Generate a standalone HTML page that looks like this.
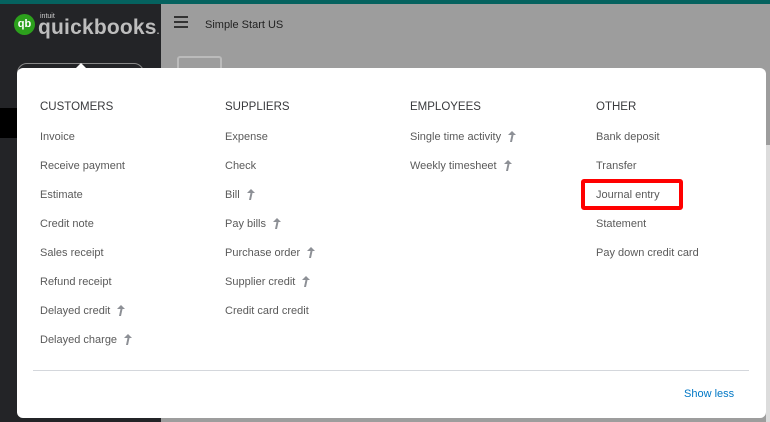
<!DOCTYPE html>
<html><head><meta charset="utf-8"><style>
*{margin:0;padding:0;box-sizing:border-box}
body{width:770px;height:422px;overflow:hidden;position:relative;background:#9d9d9d;font-family:"Liberation Sans",sans-serif}
.top{position:absolute;left:0;top:0;width:770px;height:4px;background:#05625f}
.side{position:absolute;left:0;top:4px;width:161px;height:418px;background:#232427}
.blk{position:absolute;left:0;top:108px;width:17px;height:30px;background:#000}
.logo{position:absolute;left:14px;top:14px;width:21px;height:21px;border-radius:50%;background:#2ca01c;color:#fff;font-size:11px;font-weight:bold;text-align:center;line-height:20px}
.qb{position:absolute;left:38px;top:16px;color:#bdbdbd;font-size:21px;font-weight:bold;letter-spacing:0.2px}
.intuit{position:absolute;left:40px;top:13px;color:#ccc;font-size:7px}
.hamb{position:absolute;left:174px;top:16px;width:14px}
.hamb i{display:block;height:2px;background:#333;margin-bottom:3px}
.title{position:absolute;left:205px;top:19px;font-size:11px;color:#222}
.box{position:absolute;left:177px;top:56px;width:45px;height:30px;border:2px solid #bbb;border-radius:3px}
.pill{position:absolute;left:17px;top:63px;width:127px;height:20px;border:1px solid #888;border-radius:10px}
.rs{position:absolute;left:766px;top:145px;width:4px;height:277px;background:#dcdcdc}
.panel{position:absolute;left:17px;top:68px;width:749px;height:350px;background:#fff;border-radius:6px}
.caret{position:absolute;left:75px;top:63px;width:0;height:0;border-left:6px solid transparent;border-right:6px solid transparent;border-bottom:6px solid #fff}
.col{position:absolute;top:33px;font-size:11px;color:#393a3d}
.col h4{font-weight:normal;font-size:11.5px;color:#393a3d;margin-bottom:15px;height:15px}
.col div{height:29px;color:#5a5a5a}
.up{display:inline-block;vertical-align:-2px;margin-left:6px}
.hr{position:absolute;left:16px;top:302px;width:716px;height:1px;background:#d4d7dc}
.sl{position:absolute;left:667px;top:320px;font-size:11px;color:#0077c5}
.red{position:absolute;left:581px;top:179px;width:102px;height:31px;border:4px solid #f00;border-radius:3px}
</style></head><body>
<div class="top"></div>
<div class="side"></div>
<div class="blk"></div>
<div class="logo">qb</div>
<div class="intuit">intuit</div>
<div class="qb">quickbooks<span style="font-size:9px">.</span></div>
<div class="hamb"><i></i><i></i><i></i></div>
<div class="title">Simple Start US</div>
<div class="box"></div>
<div class="pill"></div>
<div class="rs"></div>
<div class="panel">
<div class="col" style="left:23px"><h4>CUSTOMERS</h4>
<div>Invoice</div><div>Receive payment</div><div>Estimate</div><div>Credit note</div><div>Sales receipt</div><div>Refund receipt</div>
<div>Delayed credit<svg class="up" width="9" height="11" viewBox="0 0 9 11"><path d="M5 0L9 4H6.5L5 11H3L4.5 4H1Z" fill="#8d9096"/></svg></div>
<div>Delayed charge<svg class="up" width="9" height="11" viewBox="0 0 9 11"><path d="M5 0L9 4H6.5L5 11H3L4.5 4H1Z" fill="#8d9096"/></svg></div></div>
<div class="col" style="left:208px"><h4>SUPPLIERS</h4>
<div>Expense</div><div>Check</div>
<div>Bill<svg class="up" width="9" height="11" viewBox="0 0 9 11"><path d="M5 0L9 4H6.5L5 11H3L4.5 4H1Z" fill="#8d9096"/></svg></div>
<div>Pay bills<svg class="up" width="9" height="11" viewBox="0 0 9 11"><path d="M5 0L9 4H6.5L5 11H3L4.5 4H1Z" fill="#8d9096"/></svg></div>
<div>Purchase order<svg class="up" width="9" height="11" viewBox="0 0 9 11"><path d="M5 0L9 4H6.5L5 11H3L4.5 4H1Z" fill="#8d9096"/></svg></div>
<div>Supplier credit<svg class="up" width="9" height="11" viewBox="0 0 9 11"><path d="M5 0L9 4H6.5L5 11H3L4.5 4H1Z" fill="#8d9096"/></svg></div>
<div>Credit card credit</div></div>
<div class="col" style="left:393px"><h4>EMPLOYEES</h4>
<div>Single time activity<svg class="up" width="9" height="11" viewBox="0 0 9 11"><path d="M5 0L9 4H6.5L5 11H3L4.5 4H1Z" fill="#8d9096"/></svg></div>
<div>Weekly timesheet<svg class="up" width="9" height="11" viewBox="0 0 9 11"><path d="M5 0L9 4H6.5L5 11H3L4.5 4H1Z" fill="#8d9096"/></svg></div></div>
<div class="col" style="left:579px"><h4>OTHER</h4>
<div>Bank deposit</div><div>Transfer</div><div>Journal entry</div><div>Statement</div><div>Pay down credit card</div></div>
<div class="hr"></div>
<div class="sl">Show less</div>
</div>
<div class="caret"></div>
<div class="red"></div>
</body></html>
